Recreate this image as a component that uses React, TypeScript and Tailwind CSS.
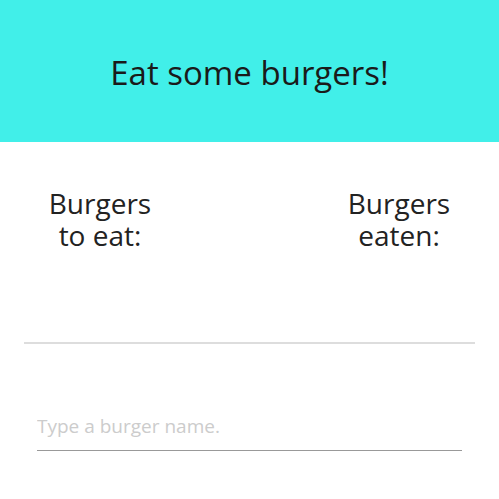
export default function App() {
  return (
    <div className="w-[499px] h-[499px] bg-white" style={{ fontFamily: '"Open Sans", sans-serif' }}>
      <div className="h-[142px] bg-[#41efe9] flex items-center justify-center">
        <h1 className="text-[33px] text-[#1a1a1a] leading-none pt-[2px]">Eat some burgers!</h1>
      </div>
      <div className="flex justify-between pt-[45px] h-[200px]">
        <div className="w-[200px] text-center text-[28px] leading-[32px] text-[#222]">
          Burgers<br />to eat:
        </div>
        <div className="w-[200px] text-center text-[28px] leading-[32px] text-[#222]">
          Burgers<br />eaten:
        </div>
      </div>
      <div className="mx-[24px] h-[2px] bg-[#dddddd]" />
      <div className="px-[37px] pt-[70px]">
        <input
          className="w-full border-b border-[#999] pb-[12px] leading-[24px] h-[37px] text-[19px] outline-none placeholder:text-[#cccccc] bg-transparent"
          placeholder="Type a burger name."
        />
      </div>
    </div>
  );
}
